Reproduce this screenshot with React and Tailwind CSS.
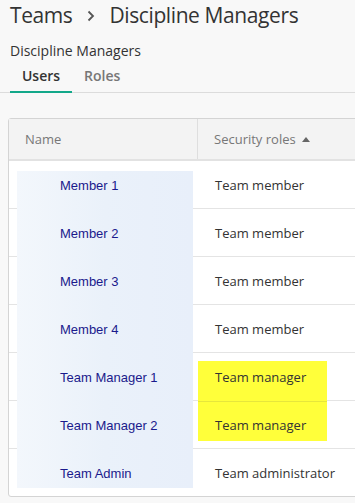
import React from "react";

const rows = [
  ["Member 1", "Team member"],
  ["Member 2", "Team member"],
  ["Member 3", "Team member"],
  ["Member 4", "Team member"],
  ["Team Manager 1", "Team manager"],
  ["Team Manager 2", "Team manager"],
  ["Team Admin", "Team administrator"],
];

export default function App() {
  return (
    <div
      className="w-[355px] h-[503px] overflow-hidden bg-[#f8f8f8] text-[#333]"
      style={{ fontFamily: '"Open Sans", "Noto Sans", sans-serif' }}
    >
      <div className="pl-[10px] flex items-center h-[30px] text-[21px] leading-[30px] tracking-[-0.4px] text-[#333]">
        <span>Teams</span>
        <svg width="8" height="12" viewBox="0 0 8 12" className="ml-[15px] mr-[14px] mt-[2px]">
          <path d="M1.5 1.5 L6 6 L1.5 10.5" fill="none" stroke="#555" strokeWidth="1.8" />
        </svg>
        <span>Discipline Managers</span>
      </div>
      <div className="pl-[10px] mt-[11px] text-[14px] leading-[20px] text-[#333]">Discipline Managers</div>
      <div className="mt-[5px] flex border-b border-[#dcdcdc] h-[27px]">
        <div className="ml-[10px] w-[62px] flex justify-center border-b-[2px] border-[#13a88a] text-[14px] leading-[20px] font-semibold text-[#333] h-[27px] -mb-px">
          Users
        </div>
        <div className="ml-[12px] text-[14px] leading-[20px] font-semibold text-[#777]">Roles</div>
      </div>
      <div className="relative ml-[8px] mt-[25px] w-[400px] border border-[#d4d4d4] rounded-[3px] bg-white">
        <div className="flex h-[40px] bg-[#f3f3f3] text-[13px] text-[#777]">
          <div className="w-[189px] border-r border-[#dedede] pl-[16px] pt-[1px] flex items-center">Name</div>
          <div className="flex-1 pl-[16px] pt-[1px] flex items-center">
            Security roles
            <svg width="8" height="5" viewBox="0 0 8 5" className="ml-[6px]">
              <path d="M0 5 L4 0 L8 5 Z" fill="#666" />
            </svg>
          </div>
        </div>
        <div className="h-[2px] bg-[#e2e2e2]" />
        {rows.map(([n, r], i) => (
          <div
            key={n}
            className={`flex pt-[2px] ${i < rows.length - 1 ? "h-[48px] border-b border-[#e4e4e4]" : "h-[47px]"} text-[13px]`}
          >
            <div className="w-[190px] pl-[51px] flex items-center">
              <span
                className="relative z-10 text-[#1a1a8c]"
                style={{ fontFamily: '"Liberation Sans", Arial, sans-serif' }}
              >
                {n}
              </span>
            </div>
            <div className="flex-1 pl-[16px] flex items-center">
              <span className="relative z-10 text-[#333]">{r}</span>
            </div>
          </div>
        ))}
        <div className="absolute z-[5] left-[8px] top-[52px] w-[176px] h-[317px] bg-gradient-to-r from-[#f3f7fc] via-[#eaf1fa] to-[#e8effa]" />
        <div className="absolute z-[5] left-[189px] top-[242px] w-[129px] h-[80px] bg-[#ffff3a] flex flex-col">
          <div className="h-[40px]" />
          <div className="h-[1px] bg-[#e6e63c]" />
        </div>
      </div>
    </div>
  );
}
